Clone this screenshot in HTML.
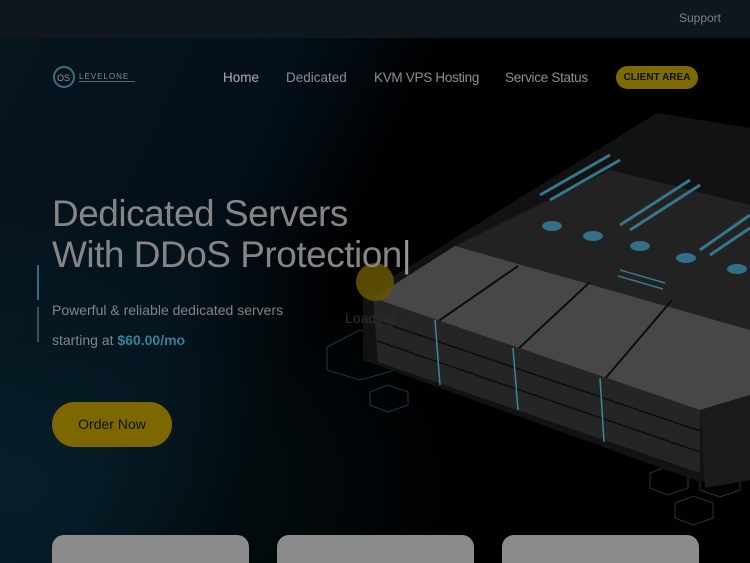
<!DOCTYPE html>
<html><head><meta charset="utf-8"><style>
*{margin:0;padding:0;box-sizing:border-box}
html,body{width:750px;height:563px;overflow:hidden}
body{background:#000;font-family:"Liberation Sans",sans-serif;position:relative}
.top{position:absolute;left:0;top:0;width:750px;height:38px;background:#0f161c}
.top span{position:absolute;right:29px;top:11px;color:#7d8286;font-size:12px}
.hero{position:absolute;left:0;top:38px;width:750px;height:525px;background:linear-gradient(115deg,#06141c 0%,#03101a 30%,#000 45%,#000 100%)}
.glow{position:absolute;left:0;top:38px;width:750px;height:525px;background:radial-gradient(ellipse at 0% 85%,rgba(8,40,52,.6) 0%,rgba(0,0,0,0) 45%)}
.nav a{position:absolute;top:70px;color:#8f8f8f;font-size:13.5px;text-decoration:none}
.btn{position:absolute;left:616px;top:66px;width:82px;height:23px;border-radius:12px;background:#7d6a00;color:#111;font-size:10px;font-weight:bold;text-align:center;line-height:23px}
h1{position:absolute;left:52px;top:193px;color:#858585;font-size:37px;font-weight:normal;line-height:41px;letter-spacing:-.5px}
.sub{position:absolute;left:52px;color:#848484;font-size:14px}
.order{position:absolute;left:52px;top:402px;width:120px;height:45px;border-radius:23px;background:#7d6800;color:#111;font-size:14px;text-align:center;line-height:45px}
.card{position:absolute;top:535px;width:197px;height:40px;border-radius:12px;background:#8b8b8b}
</style></head><body>
<div class="top"><span>Support</span></div>
<div class="hero"></div><div class="glow"></div>
<svg style="position:absolute;left:0;top:0" width="750" height="563">
<g fill="none" stroke="#1f3640" stroke-width="1">
<path d="M327 347 L360 330 L395 345 L395 370 L360 380 L327 370Z"/><path d="M370 392 L388 385 L408 392 L408 405 L388 412 L370 405Z"/>
<path d="M650 473 L668 466 L688 473 L688 488 L668 495 L650 488Z"/><path d="M675 503 L693 496 L713 503 L713 518 L693 525 L675 518Z"/><path d="M700 478 L720 470 L740 478 L740 490 L720 497 L700 490Z"/>
</g>
<polygon points="363,295 657,113 750,128 750,470 700,482 363,360" fill="#121212"/>
<polygon points="455,246 610,170 750,205 750,330" fill="#222"/>
<g stroke="#36778f" stroke-width="3"><path d="M540 195 L610 155"/><path d="M550 200 L620 160"/><path d="M620 225 L690 180"/><path d="M630 230 L700 185"/><path d="M700 250 L750 215"/><path d="M710 255 L750 228"/></g>
<g fill="#336f87"><ellipse cx="552" cy="226" rx="10" ry="5"/><ellipse cx="593" cy="236" rx="10" ry="5"/><ellipse cx="640" cy="246" rx="10" ry="5"/><ellipse cx="686" cy="258" rx="10" ry="5"/><ellipse cx="737" cy="269" rx="10" ry="5"/></g>
<g stroke="#36778f" stroke-width="1.5"><path d="M620 270 L665 283"/><path d="M618 276 L663 289"/></g>
<polygon points="373,298 455,246 750,330 750,395 700,410" fill="#474747"/>
<g stroke="#0d0d0d" stroke-width="2"><path d="M437 322 L518 266"/><path d="M517 350 L590 282"/><path d="M604 380 L672 300"/></g>
<polygon points="373,298 700,410 700,473 378,362" fill="#252525"/>
<g stroke="#0d0d0d" stroke-width="1.5"><path d="M375 320 L700 431"/><path d="M377 341 L700 452"/></g>
<g stroke="#3f849e" stroke-width="1.5"><path d="M435 320 L440 385"/><path d="M513 348 L518 410"/><path d="M600 378 L604 442"/></g>
<polygon points="700,410 750,395 750,480 705,488" fill="#1a1a1a"/>
<circle cx="375" cy="282" r="19" fill="#625200" opacity=".9"/>
<text x="345" y="323" fill="#2e2e2e" font-size="14" font-family="Liberation Sans">Loading...</text>
<rect x="37" y="265" width="2" height="35" fill="#326c84"/><rect x="37" y="307" width="2" height="35" fill="#4a4a4a"/>
<circle cx="64" cy="77" r="10" fill="none" stroke="#376f85" stroke-width="2"/>
<text x="57" y="81" fill="#999" font-size="9" font-family="Liberation Sans">OS</text>
<text x="79" y="79" fill="#888" font-size="8" letter-spacing="1">LEVELONE</text>
<rect x="79" y="81" width="56" height="1" fill="#666"/>
</svg>
<div class="nav"><a style="left:223px;color:#b0b0b0">Home</a><a style="left:286px">Dedicated</a><a style="left:374px;letter-spacing:-.3px">KVM VPS Hosting</a><a style="left:505px;letter-spacing:-.3px">Service Status</a></div>
<div class="btn">CLIENT AREA</div>
<h1>Dedicated Servers<br>With DDoS Protection<span style="color:#999">|</span></h1>
<div class="sub" style="top:302px">Powerful &amp; reliable dedicated servers</div>
<div class="sub" style="top:332px">starting at <b style="color:#34809e">$60.00/mo</b></div>
<div class="order">Order Now</div>
<div class="card" style="left:52px"></div><div class="card" style="left:277px"></div><div class="card" style="left:502px"></div>
</body></html>
